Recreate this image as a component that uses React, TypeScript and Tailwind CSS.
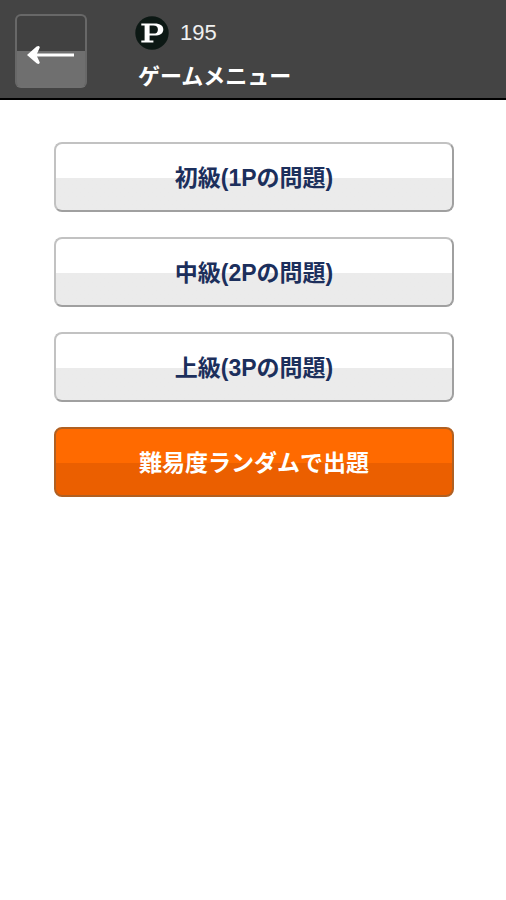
const levels = ["初級(1Pの問題)", "中級(2Pの問題)", "上級(3Pの問題)"];

function BackButton() {
  return (
    <button
      type="button"
      aria-label="戻る"
      className="flex h-[74px] w-[72px] shrink-0 items-center justify-center rounded-md border-2 border-[#686868] border-b-[#707070] bg-linear-to-b from-[#414141] from-50% to-[#6f6f6f] to-50%"
    >
      <svg width="48" height="20" viewBox="0 0 48 20" className="mt-2" aria-hidden="true">
        <path d="M7 10H47" stroke="#fff" strokeWidth="3" fill="none" />
        <path d="M0 10L9.6 1.6Q12.2 0 12.8 2.4L9.4 10L12.8 17.6Q12.2 20 9.6 18.2Z" fill="#fff" />
      </svg>
    </button>
  );
}

function PointIcon() {
  return (
    <svg width="34" height="34" viewBox="0 0 34 34" aria-hidden="true">
      <circle cx="17" cy="17" r="16.7" fill="#0c1814" />
      <path
        fill="#fff"
        fillRule="evenodd"
        d="M6.3 7.4H19.5C25.6 7.4 28.3 9.8 28.3 13.4C28.3 17.2 25.2 19.6 19.3 19.6H14.6V24.5H18.4V26.6H6.3V24.5H9.6V9.4H6.3ZM14.6 9.4V17.6H18.2C21.5 17.6 22.9 16.2 22.9 13.4C22.9 10.6 21.5 9.4 18.2 9.4Z"
      />
    </svg>
  );
}

export default function App() {
  return (
    <div className="min-h-screen bg-white font-['Liberation_Sans','Noto_Sans_CJK_JP',sans-serif]">
      <header className="flex items-start gap-12 border-b-2 border-black bg-[#444] pt-3.5 pb-[5px] pl-[15px] text-white">
        <BackButton />
        <div className="pt-0.5">
          <div className="flex items-center gap-[11px]">
            <PointIcon />
            <span className="text-[22px] leading-8 text-[#f0f0f0]">195</span>
          </div>
          <h1 className="pt-[11px] pl-[3px] text-[22px] leading-8 font-bold">ゲームメニュー</h1>
        </div>
      </header>
      <main className="flex flex-col gap-[25px] pt-[42px] pr-[52px] pl-[54px]">
        {levels.map((label) => (
          <button
            key={label}
            type="button"
            className="h-[70px] w-full rounded-lg border-2 border-t-[#c2c2c2] border-r-[#a0a0a0] border-b-[#a0a0a0] border-l-[#c2c2c2] bg-linear-to-b from-white from-52% to-[#ebebeb] to-52% pt-0.5 text-[23px] leading-8 font-bold text-[#1c2f5c]"
          >
            {label}
          </button>
        ))}
        <button
          type="button"
          className="h-[70px] w-full rounded-lg border-2 border-[#b06022] bg-linear-to-b from-[#ff6a00] from-52% to-[#eb5f00] to-52% pt-0.5 text-[23px] leading-8 font-bold text-white"
        >
          難易度ランダムで出題
        </button>
      </main>
    </div>
  );
}
